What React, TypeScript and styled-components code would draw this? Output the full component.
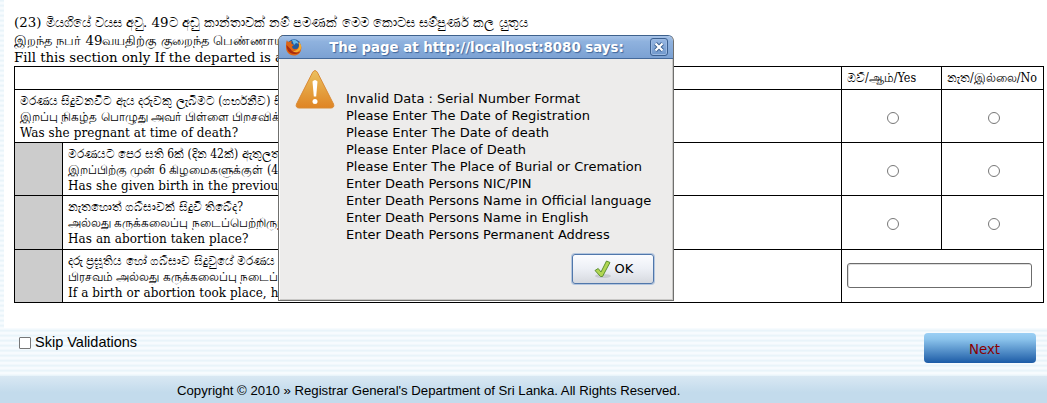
import React from "react";
import styled, { createGlobalStyle } from "styled-components";

const stripes = "repeating-linear-gradient(#e9f4fa 0 1px, #eef7fb 1px 2px, #f7fbfe 2px 4px, #f1f8fc 4px 5px)";

const GlobalStyle = createGlobalStyle`
  * { box-sizing: border-box; }
  body { margin: 0; background: #fff; color: #000; }
`;
const Page = styled.div`
  position: relative;
  width: 1047px;
  height: 403px;
  overflow: hidden;
  display: flex;
  flex-direction: column;
  background: ${stripes};
`;
const Sheet = styled.main`
  height: 328px;
  margin-left: 4px;
  padding: 14px 3px 0 10px;
  background: #fff;
  flex: none;
`;
const Heading = styled.header`
  height: 52px;
  overflow: hidden;
`;
const Line = styled.div<{ $size: number; $height: number; $gap?: number; $drop?: number; $condensed?: boolean }>`
  font-family: ${(p) => (p.$condensed ? '"DejaVu Serif Condensed", ' : "")}"DejaVu Serif", serif;
  font-stretch: ${(p) => (p.$condensed ? "condensed" : "normal")};
  font-size: ${(p) => p.$size}px;
  line-height: ${(p) => p.$height}px;
  height: ${(p) => p.$height}px;
  padding-top: ${(p) => p.$drop ?? 0}px;
  letter-spacing: ${(p) => p.$gap ?? 0}px;
  white-space: pre;
`;
const Table = styled.section`
  width: 1030px;
  height: 237px;
  display: grid;
  grid-template-columns: 48px 779px 100px 102px;
  grid-template-rows: 23px 53px 53px 54px 53px;
  border-top: 1px solid #000;
  border-left: 1px solid #000;
`;
const Cell = styled.div<{ $span?: number; $shade?: boolean; $center?: boolean }>`
  grid-column: span ${(p) => p.$span ?? 1};
  border-right: 1px solid #000;
  border-bottom: 1px solid #000;
  background: ${(p) => (p.$shade ? "#ccc" : "#fff")};
  padding: 2px 5px 0;
  overflow: hidden;
  ${(p) => p.$center && "display: flex; align-items: flex-start; justify-content: center; padding: 22px 0 0 3px;"}
`;
const Radio = styled.span`
  width: 12px;
  height: 12px;
  border: 1px solid #777;
  border-radius: 50%;
  background: #fff;
`;
const TextInput = styled.input`
  display: block;
  width: 185px;
  height: 25px;
  margin-top: 11px;
  border: 1px solid #6c6c6c;
  border-radius: 3px;
  box-shadow: inset 1px 1px 0 #ddd;
`;
const Controls = styled.div`
  height: 48px;
  flex: none;
  display: flex;
  justify-content: space-between;
  align-items: flex-start;
  padding: 5px 11px 0 19px;
`;
const Skip = styled.label`
  display: flex;
  align-items: center;
  height: 18px;
  gap: 4px;
  font: 14.5px/18px "Liberation Sans", sans-serif;
  white-space: nowrap;
`;
const Box = styled.span`
  width: 12px;
  height: 12px;
  margin-top: 2px;
  border: 1px solid #777;
  border-radius: 1px;
  background: #fff;
`;
const NextButton = styled.button`
  width: 112px;
  height: 30px;
  padding: 2px 0 0 9px;
  border: 0;
  border-radius: 4px;
  background: linear-gradient(#9bd0f5, #8cc4ec 20%, #1c5ba6);
  color: #8b0000;
  font: 13.4px "DejaVu Sans", sans-serif;
`;
const Footer = styled.footer`
  height: 27px;
  flex: none;
  padding: 6px 0 0 177px;
  background: linear-gradient(#d9e8f3, #c3dbec 60%);
  font: 13.2px/18px "Liberation Sans", sans-serif;
  white-space: nowrap;
`;
const Dialog = styled.div`
  position: absolute;
  left: 278px;
  top: 35px;
  width: 396px;
  height: 266px;
  border: 1px solid #6f6f6d;
  border-top-color: #3e618c;
  border-radius: 6px 6px 0 0;
  background: #edeceb;
  box-shadow: inset 1px 0 #fff, inset -1px -1px #c9c8c6;
  overflow: hidden;
`;
const TitleBar = styled.div`
  height: 23px;
  display: flex;
  align-items: center;
  padding: 0 5px 0 6px;
  border-bottom: 1px solid #44699a;
  background: linear-gradient(#a7c3e8, #8fb2de 25%, #7ba1d3);
`;
const Title = styled.div`
  flex: 1;
  padding-top: 1px;
  text-align: center;
  color: #fff;
  font: bold 13.33px/20px "DejaVu Sans", sans-serif;
  text-shadow: 1px 1px 1px #3f679c;
  white-space: nowrap;
`;
const CloseButton = styled.button`
  display: flex;
  align-items: center;
  justify-content: center;
  width: 18px;
  height: 18px;
  padding: 0;
  border: 1px solid #3c6090;
  border-radius: 3px;
  background: linear-gradient(#97b7e2, #7098cc);
  box-shadow: inset 0 0 0 1px #9cbae2;
`;
const DialogBody = styled.div`
  display: flex;
  height: 184px;
  padding: 10px 0 0 16px;
`;
const Messages = styled.div`
  margin: 21px 0 0 11px;
  font: 13px/17px "DejaVu Sans", sans-serif;
  white-space: nowrap;
`;
const Actions = styled.div`
  display: flex;
  justify-content: flex-end;
  padding: 11px 19px 0;
`;
const OkButton = styled.button`
  width: 82px;
  height: 30px;
  display: flex;
  align-items: center;
  justify-content: center;
  gap: 3px;
  padding: 0 0 1px;
  border: 1px solid #5077ab;
  border-radius: 3px;
  box-shadow: 0 0 0 1px #b4c6de;
  background: linear-gradient(#fbfcff, #eceff5 50%, #d6d9df);
  font: 13px "DejaVu Sans", sans-serif;
  color: #000;
`;

const Firefox = () => (
  <svg width="18" height="18" viewBox="0 0 18 18">
    <circle cx="9" cy="8" r="6.8" fill="#225b9d" />
    <path d="M7 2c3-1 6 1 7 4l-3-1-2 2z" fill="#67b9e8" />
    <path d="M2 2c0 1 1 2 2 2 1-1 2-1 3-1-1 1-1 2 0 3l2 1-2 1.500c0 2 2 3 4 2.500 2 0 3-2 3-4l-1-3c3 2 4 5 3 8-1 4-4 5.500-7 5.500-5 0-8-4-8-8C1 6 1 4 2 2z" fill="#dd6515" />
    <path d="M14 4c3 3 3 7 0 9-3 3-7 2-9 0 4 1 9-1 9-5z" fill="#f6ac2e" />
    <path d="M1.500 7c0 5 3 9 8 9 2 0 4-.5 5.500-2-4 1-8 0-9.500-3z" fill="#a92c10" />
  </svg>
);
const Warning = () => (
  <svg width="40" height="40" viewBox="0 0 40 40">
    <defs>
      <linearGradient id="warn" x1="0" y1="0" x2="0" y2="1">
        <stop offset="0" stopColor="#ebc05e" />
        <stop offset="1" stopColor="#df8424" />
      </linearGradient>
    </defs>
    <path d="M17.700 3.200Q20 0 22.300 3.200L38.500 35Q39.800 38.700 36 39H4Q.200 38.700 1.500 35Z" fill="url(#warn)" stroke="#d98a35" />
    <path d="M17.500 12.500Q20 9.500 22.500 12.500L21.200 27.500H18.800Z" fill="#fff" />
    <circle cx="20" cy="32.500" r="2.500" fill="#fff" />
  </svg>
);
const Check = () => (
  <svg width="19" height="20" viewBox="0 0 19 20">
    <ellipse cx="10" cy="17" rx="8" ry="2" fill="#c7cad0" />
    <path d="M2 11.500L5.200 9.500 8 13 13.500 2 17 3.500 9.500 17.500H7.500Z" fill="#b1d653" stroke="#5d9132" strokeLinejoin="round" />
  </svg>
);

const rows = [
  ["මරණයට පෙර සති 6ක් (දින 42ක්) ඇතුලත දරු", "இறப்பிற்கு முன் 6 கிழமைகளுக்குள் (42", "Has she given birth in the previous 6 weeks"],
  ["නැතහොත් ගබ්සාවක් සිදුවී තිබේද?", "அல்லது கருக்கலைப்பு நடைப்பெற்றிருந்ததா", "Has an abortion taken place?"],
  ["දරු ප්‍රසූතිය හෝ ගබ්සාව සිදුවුයේ මරණය", "பிரசவம் அல்லது கருக்கலைப்பு நடைப்பெற்று", "If a birth or abortion took place, how many"],
];
const messages = [
  "Invalid Data : Serial Number Format",
  "Please Enter The Date of Registration",
  "Please Enter The Date of death",
  "Please Enter Place of Death",
  "Please Enter The Place of Burial or Cremation",
  "Enter Death Persons NIC/PIN",
  "Enter Death Persons Name in Official language",
  "Enter Death Persons Name in English",
  "Enter Death Persons Permanent Address",
];

const Question = ({ lines }: { lines: string[] }) => (
  <>
    <Line $size={12} $height={17} $drop={1} $condensed>{lines[0]}</Line>
    <Line $size={12.2} $height={16} $condensed>{lines[1]}</Line>
    <Line $size={13.33} $height={16} $gap={0.08} $condensed>{lines[2]}</Line>
  </>
);

export default function App() {
  return (
    <Page>
      <GlobalStyle />
      <Sheet>
        <Heading>
          <Line $size={13.33} $height={18}>(23) මියගියේ වයස අවු. 49ට අඩු කාන්තාවක් නම් පමණක් මෙම කොටස සම්පුර්ණ කල යුතුය</Line>
          <Line $size={13.33} $height={17}>இறந்த நபர் 49வயதிற்கு குறைந்த பெண்ணாயின் மட்டும் இப்பிரிவை நிரப்பவும் மற்றவர்களுக்கு தேவையில்லை</Line>
          <Line $size={13.33} $height={17} $gap={-0.02}>Fill this section only If the departed is a female</Line>
        </Heading>
        <Table>
          <Cell $span={2} />
          <Cell><Line $size={12.4} $height={18} $condensed>ඔව්/ஆம்/Yes</Line></Cell>
          <Cell><Line $size={12.4} $height={18} $condensed>නැත/இல்லை/No</Line></Cell>
          <Cell $span={2}>
            <Question lines={["මරණය සිදුවනවිට ඇය දරුවකු ලැබීමට (ගර්භනීව) සිටියාද", "இறப்பு நிகழ்த பொழுது அவர் பிள்ளை பிறசவிக்க", "Was she pregnant at time of death?"]} />
          </Cell>
          <Cell $center><Radio /></Cell>
          <Cell $center><Radio /></Cell>
          {rows.map((lines, i) => (
            <React.Fragment key={i}>
              <Cell $shade />
              <Cell><Question lines={lines} /></Cell>
              {i < 2 ? (
                <>
                  <Cell $center><Radio /></Cell>
                  <Cell $center><Radio /></Cell>
                </>
              ) : (
                <Cell $span={2}><TextInput /></Cell>
              )}
            </React.Fragment>
          ))}
        </Table>
      </Sheet>
      <Controls>
        <Skip><Box />Skip Validations</Skip>
        <NextButton>Next</NextButton>
      </Controls>
      <Footer>Copyright © 2010 » Registrar General's Department of Sri Lanka. All Rights Reserved.</Footer>
      <Dialog>
        <TitleBar>
          <Firefox />
          <Title>The page at http://localhost:8080 says:</Title>
          <CloseButton>
            <svg width="10" height="10" viewBox="0 0 10 10">
              <path d="M1.500 1.500L8.500 8.500M8.500 1.500L1.500 8.500" stroke="#3c6090" strokeWidth="4" />
              <path d="M1.500 1.500L8.500 8.500M8.500 1.500L1.500 8.500" stroke="#fff" strokeWidth="2.200" />
            </svg>
          </CloseButton>
        </TitleBar>
        <DialogBody>
          <Warning />
          <Messages>{messages.map((m) => <div key={m}>{m}</div>)}</Messages>
        </DialogBody>
        <Actions>
          <OkButton><Check />OK</OkButton>
        </Actions>
      </Dialog>
    </Page>
  );
}
